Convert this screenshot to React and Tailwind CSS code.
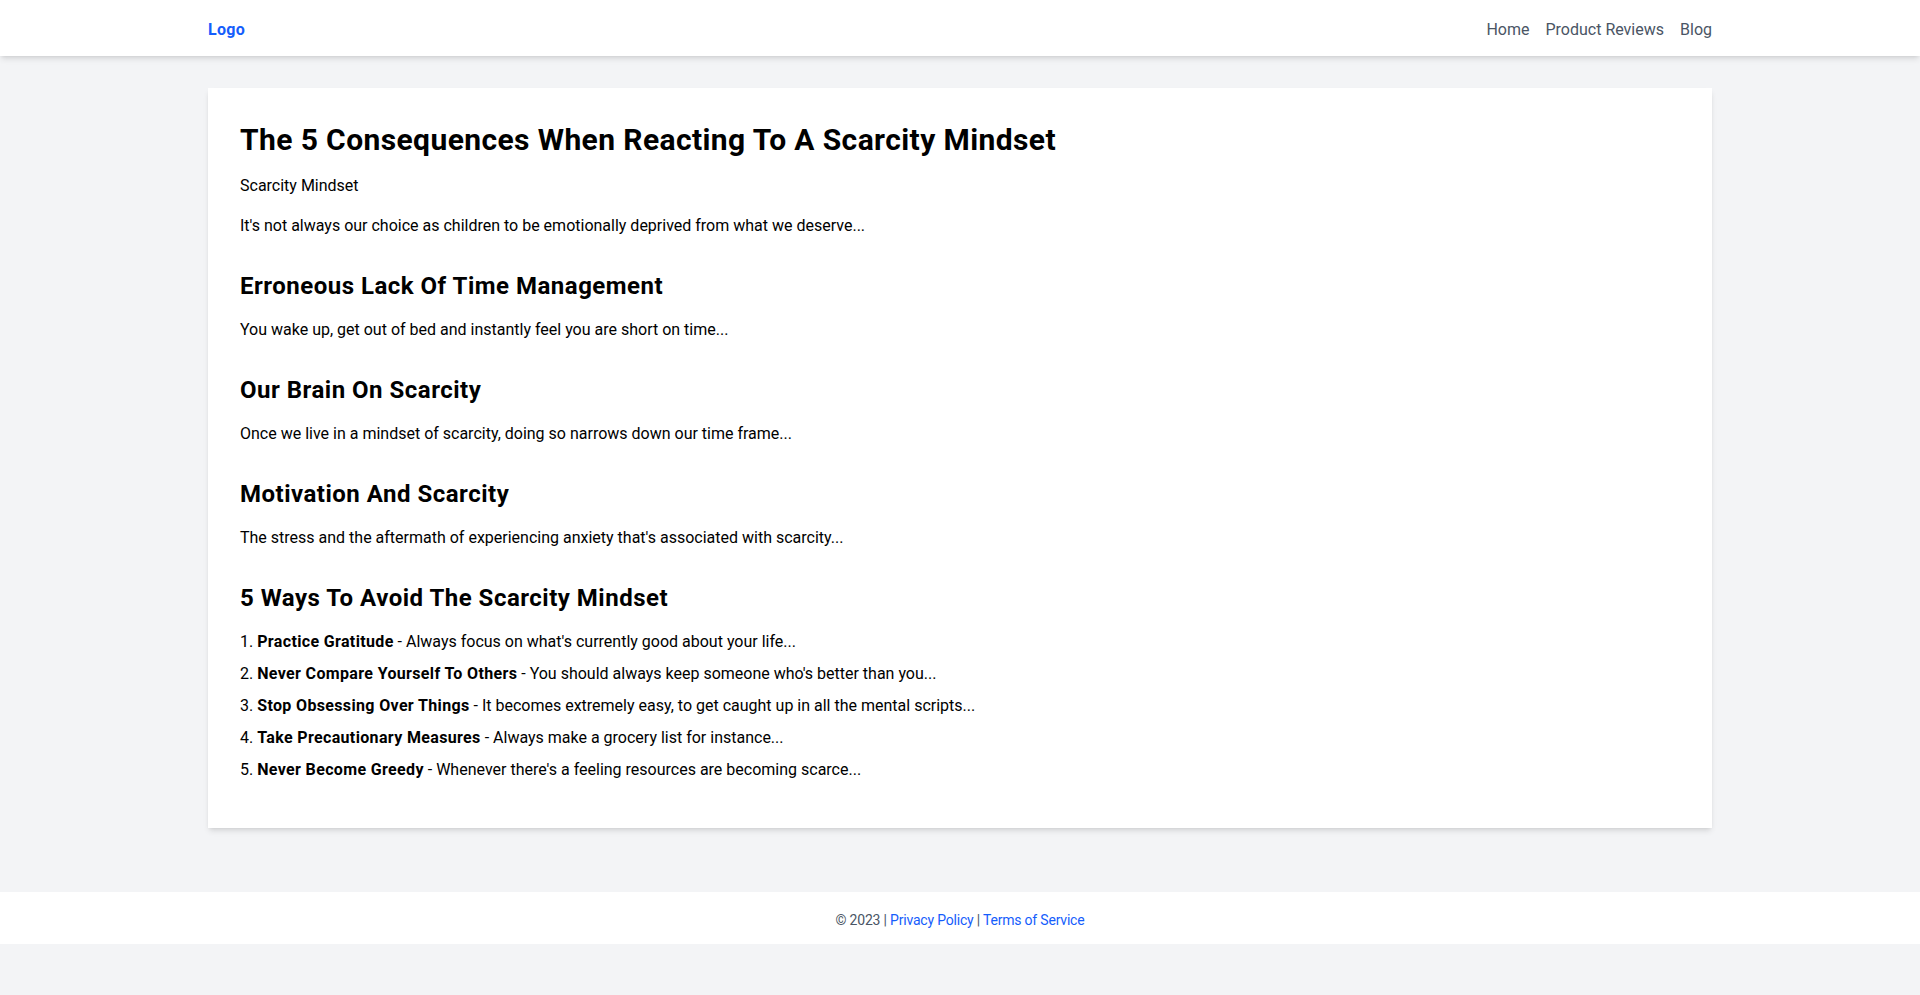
const sections = [
  {
    title: 'Erroneous Lack Of Time Management',
    text: 'You wake up, get out of bed and instantly feel you are short on time...',
  },
  {
    title: 'Our Brain On Scarcity',
    text: 'Once we live in a mindset of scarcity, doing so narrows down our time frame...',
  },
  {
    title: 'Motivation And Scarcity',
    text: "The stress and the aftermath of experiencing anxiety that's associated with scarcity...",
  },
];

const ways = [
  ['Practice Gratitude', "Always focus on what's currently good about your life..."],
  ['Never Compare Yourself To Others', "You should always keep someone who's better than you..."],
  ['Stop Obsessing Over Things', 'It becomes extremely easy, to get caught up in all the mental scripts...'],
  ['Take Precautionary Measures', 'Always make a grocery list for instance...'],
  ['Never Become Greedy', "Whenever there's a feeling resources are becoming scarce..."],
];

export default function App() {
  return (
    <div className="min-h-screen bg-gray-100 font-['Roboto',sans-serif] text-black">
      <header className="bg-white shadow-md">
        <div className="mx-auto max-w-[1536px] px-4 h-14 flex items-center justify-between pt-1">
          <a href="#" className="text-blue-600 font-bold text-base tracking-[0.3px]">Logo</a>
          <nav className="flex gap-4 text-gray-600 text-base">
            <a href="#">Home</a>
            <a href="#">Product Reviews</a>
            <a href="#">Blog</a>
          </nav>
        </div>
      </header>

      <main className="mx-auto max-w-[1536px] px-4 pt-8 pb-16">
        <article className="bg-white shadow-md pt-[34px] px-8 pb-[30px]">
          <h1 className="text-3xl font-bold mb-4 tracking-[0.4px]">The 5 Consequences When Reacting To A Scarcity Mindset</h1>
          <p className="mb-4">Scarcity Mindset</p>
          <p className="mb-8">It's not always our choice as children to be emotionally deprived from what we deserve...</p>

          {sections.map((s) => (
            <section key={s.title} className="mb-8">
              <h2 className="text-2xl font-bold mb-4 tracking-[0.5px]">{s.title}</h2>
              <p>{s.text}</p>
            </section>
          ))}

          <h2 className="text-2xl font-bold mb-4 tracking-[0.5px]">5 Ways To Avoid The Scarcity Mindset</h2>
          <ol className="flex flex-col gap-2 mb-4">
            {ways.map(([head, body], i) => (
              <li key={head}>
                {i + 1}. <strong className="font-bold tracking-[0.35px]">{head}</strong> - {body}
              </li>
            ))}
          </ol>
        </article>
      </main>

      <footer className="bg-white pt-[18px] pb-[14px] text-center text-sm text-gray-600 tracking-[-0.2px]">
        © 2023 | <a href="#" className="text-blue-600">Privacy Policy</a> | <a href="#" className="text-blue-600">Terms of Service</a>
      </footer>
    </div>
  );
}
